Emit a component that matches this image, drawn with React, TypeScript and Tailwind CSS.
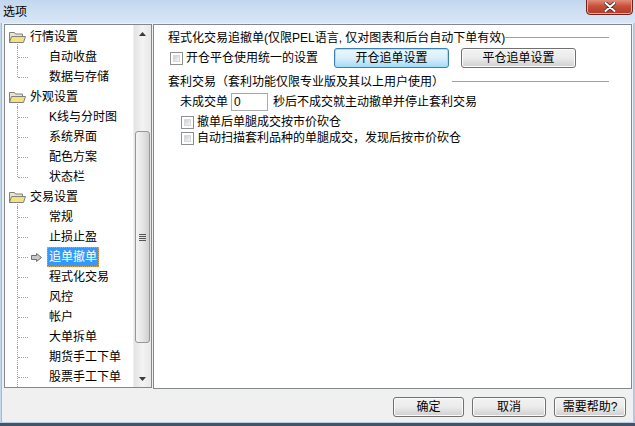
import React from 'react';

const FONT = { fontFamily: '"Liberation Sans", "Noto Sans CJK SC", sans-serif' };

type TreeNode = { label: string; parent?: boolean; selected?: boolean; lastChild?: boolean };

const tree: TreeNode[] = [
  { label: '行情设置', parent: true },
  { label: '自动收盘' },
  { label: '数据与存储', lastChild: true },
  { label: '外观设置', parent: true },
  { label: 'K线与分时图' },
  { label: '系统界面' },
  { label: '配色方案' },
  { label: '状态栏', lastChild: true },
  { label: '交易设置', parent: true },
  { label: '常规' },
  { label: '止损止盈' },
  { label: '追单撤单', selected: true },
  { label: '程式化交易' },
  { label: '风控' },
  { label: '帐户' },
  { label: '大单拆单' },
  { label: '期货手工下单' },
  { label: '股票手工下单' },
];

const Folder = () => (
  <svg width="17" height="12" viewBox="0 0 17 12">
    <path d="M0.5 1.5h5l1 1.5h7v8.5h-13z" fill="#ece6c6" stroke="#808080" />
    <path d="M2.5 5.5h14l-2 6h-14z" fill="#f3e27c" stroke="#808080" />
  </svg>
);

const Checkbox = () => (
  <div className="w-[13px] h-[13px] border border-[#8e8f8f] bg-white p-[2px] shrink-0">
    <div className="w-full h-full bg-gradient-to-br from-[#cbcfd5] to-[#f6f6f6] border border-[#d6d8db]" />
  </div>
);

const WinButton = ({ label, focused, className }: { label: string; focused?: boolean; className?: string }) => (
  <button
    className={
      'h-[20px] rounded-[3px] border text-[12px] leading-[18px] text-black ' +
      (focused
        ? 'border-[#3c7fb1] bg-gradient-to-b from-[#eaf6fd] via-[#d9f0fc] to-[#a7d9f5] shadow-[inset_0_0_0_1px_#9fe0fb] '
        : 'border-[#707070] bg-gradient-to-b from-[#f2f2f2] via-[#ebebeb] to-[#cfcfcf] shadow-[inset_0_0_0_1px_#fcfcfc] ') +
      (className ?? '')
    }
  >
    {label}
  </button>
);

const TreeRow = ({ node }: { node: TreeNode }) => {
  if (node.parent) {
    return (
      <div className="relative h-[20px] flex items-center pl-[4px]">
        <Folder />
        <span className="ml-[4px] text-[12px]">{node.label}</span>
        <div className="absolute left-[12px] top-[17px] bottom-0 border-l border-dotted border-[#a0a0a0]" />
      </div>
    );
  }
  return (
    <div className="relative h-[20px] flex items-center">
      <div
        className={
          'absolute left-[12px] top-0 border-l border-dotted border-[#a0a0a0] ' +
          (node.lastChild ? 'h-[10px]' : 'bottom-0')
        }
      />
      <div className="absolute left-[13px] top-[10px] w-[10px] border-t border-dotted border-[#a0a0a0]" />
      {node.selected && (
        <svg className="absolute left-[26px] top-[6px]" width="11" height="9" viewBox="0 0 11 9">
          <path d="M0.5 2.5h5v-2l5 4-5 4v-2h-5z" fill="#c8c8c8" stroke="#6e6e6e" />
        </svg>
      )}
      {node.selected ? (
        <span className="ml-[42px] px-[1px] h-[20px] leading-[18px] border border-dotted border-[#e8a040] bg-[#3399ff] text-white text-[12px]">
          {node.label}
        </span>
      ) : (
        <span className="ml-[44px] text-[12px]">{node.label}</span>
      )}
    </div>
  );
};

const ScrollBar = () => (
  <div className="w-[18px] h-full flex flex-col bg-gradient-to-r from-[#e3e3e3] via-[#f3f3f3] to-[#e8e8e8] border-l border-[#efefef]">
    <div className="h-[17px] flex items-center justify-center">
      <svg width="7" height="4" viewBox="0 0 7 4"><path d="M3.5 0L7 4H0z" fill="#3a3a3a" /></svg>
    </div>
    <div className="h-[89px]" />
    <div className="h-[212px] mx-[1px] rounded-[3px] border border-[#979797] bg-gradient-to-r from-[#f4f4f4] via-[#e6e6e6] to-[#cfcfcf] flex items-center justify-center">
      <div className="flex flex-col gap-[1px]">
        <div className="w-[7px] h-[1px] bg-[#555]" />
        <div className="w-[7px] h-[1px] bg-[#555]" />
        <div className="w-[7px] h-[1px] bg-[#555]" />
        <div className="w-[7px] h-[1px] bg-[#555]" />
      </div>
    </div>
    <div className="flex-1" />
    <div className="h-[17px] flex items-center justify-center">
      <svg width="7" height="4" viewBox="0 0 7 4"><path d="M0 0h7L3.5 4z" fill="#3a3a3a" /></svg>
    </div>
  </div>
);

export default function App() {
  return (
    <div
      className="w-[635px] h-[426px] relative overflow-hidden flex flex-col bg-gradient-to-r from-[#c4d8ef] via-[#cfdff3] to-[#b7c9de] text-black"
      style={FONT}
    >
      {/* Title bar */}
      <div className="h-[23px] flex items-center pl-[3px] bg-gradient-to-b from-[#c2d7ef] to-[#d9e7f6] text-[12px]">
        选项
      </div>
      <div className="absolute right-[2px] top-[-3px] w-[47px] h-[18px] rounded-b-[4px] border border-[#6e2222] bg-gradient-to-b from-[#e6a08f] via-[#c9503a] to-[#b23a24] shadow-[inset_0_0_0_1px_#e8a898] flex items-end justify-center pb-[2px]">
        <svg width="12" height="10" viewBox="0 0 12 10">
          <path d="M1.5 1l9 8M10.5 1l-9 8" stroke="#4a2a2a" strokeWidth="3.6" strokeLinecap="round" />
          <path d="M1.5 1l9 8M10.5 1l-9 8" stroke="#ffffff" strokeWidth="2" strokeLinecap="round" />
        </svg>
      </div>

      {/* Body */}
      <div className="h-[399px] ml-[1px] mr-[2px] flex flex-col bg-[#f0f0f0] border-l border-[#a9b9cc]">
        <div className="h-[365px] flex gap-[1px] pt-[1px] pl-[2px] pr-[1px]">
          {/* Tree */}
          <div className="w-[148px] h-[364px] flex border border-[#828790] bg-white">
            <div className="flex-1 pt-[2px] overflow-hidden">
              {tree.map((n) => (
                <TreeRow key={n.label} node={n} />
              ))}
            </div>
            <ScrollBar />
          </div>

          {/* Settings page */}
          <div className="flex-1 h-[365px] border border-[#828790] bg-white pl-[14px] pr-[22px] pt-[5px] text-[12px]">
            <div className="h-[16px] flex items-center">
              <span className="whitespace-nowrap">程式化交易追撤单(仅限PEL语言, 仅对图表和后台自动下单有效)</span>
              <div className="flex-1 h-[2px] border-t border-[#a0a0a0] border-b border-b-white" />
            </div>
            <div className="mt-[2px] h-[20px] flex items-center">
              <div className="w-[164px] ml-[2px] flex items-center gap-[3px]">
                <Checkbox />
                <span>开仓平仓使用统一的设置</span>
              </div>
              <WinButton label="开仓追单设置" focused className="w-[115px]" />
              <WinButton label="平仓追单设置" className="w-[115px] ml-[12px]" />
            </div>
            <div className="mt-[6px] h-[16px] flex items-center">
              <span className="whitespace-nowrap">套利交易（套利功能仅限专业版及其以上用户使用）</span>
              <div className="flex-1 ml-[8px] h-[2px] border-t border-[#a0a0a0] border-b border-b-white" />
            </div>
            <div className="mt-[3px] h-[18px] flex items-center ml-[12px]">
              <span>未成交单</span>
              <div className="ml-[3px] w-[37px] h-[18px] border border-[#abadb3] border-t-[#a3a6ad] pl-[2px] leading-[16px]">0</div>
              <span className="ml-[5px]">秒后不成交就主动撤单并停止套利交易</span>
            </div>
            <div className="mt-[3px] h-[16px] flex items-center ml-[13px] gap-[3px]">
              <Checkbox />
              <span>撤单后单腿成交按市价砍仓</span>
            </div>
            <div className="h-[16px] flex items-center ml-[13px] gap-[3px]">
              <Checkbox />
              <span>自动扫描套利品种的单腿成交，发现后按市价砍仓</span>
            </div>
          </div>
        </div>

        {/* Footer buttons */}
        <div className="flex-1 flex items-start justify-end pt-[9px] pr-[7px] gap-[8px]">
          <WinButton label="确定" className="w-[71px]" />
          <WinButton label="取消" className="w-[74px]" />
          <WinButton label="需要帮助?" className="w-[72px]" />
        </div>
      </div>
      <div className="flex-1 border-t border-[#b9cde5] bg-[#43536a]" />
    </div>
  );
}
